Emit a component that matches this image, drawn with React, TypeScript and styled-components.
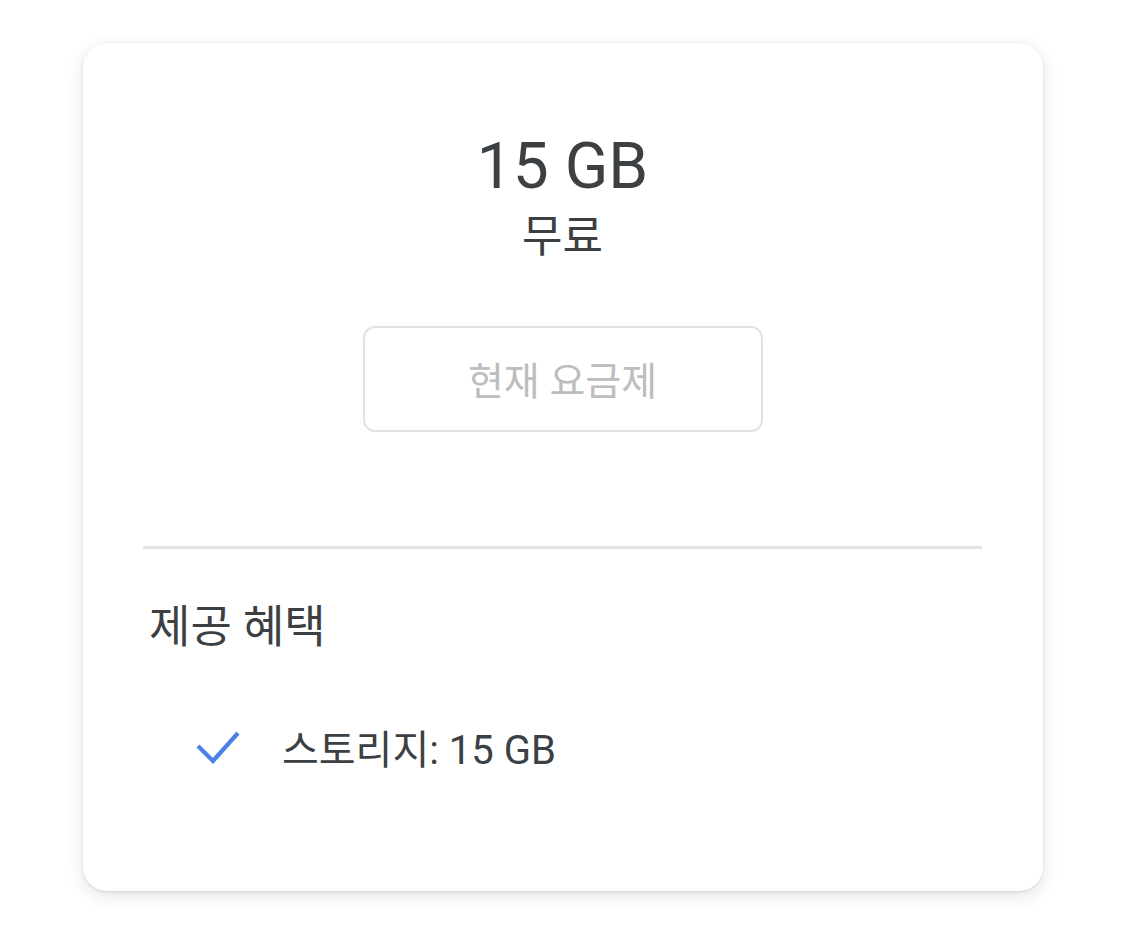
import * as React from 'react'
import styled, { createGlobalStyle } from 'styled-components'

const GlobalStyle = createGlobalStyle`
  html, body {
    margin: 0;
    padding: 0;
    background: #ffffff;
  }
  body {
    font-family: Roboto, "Noto Sans CJK KR", "Noto Sans", sans-serif;
    color: #3c4043;
  }
`

const Page = styled.div`
  padding: 43px 82px 41px 83px;
`

const Card = styled.div`
  width: 960px;
  height: 848px;
  box-sizing: border-box;
  padding: 85px 61px 0 60px;
  background: #fff;
  border-radius: 24px;
  box-shadow: 0 1px 3px rgba(0, 0, 0, 0.1), 0 5px 18px rgba(0, 0, 0, 0.11);
  display: flex;
  flex-direction: column;
`

const PlanHead = styled.div`
  display: flex;
  flex-direction: column;
  align-items: center;
`

const Size = styled.div`
  font-size: 64px;
  line-height: 77px;
  font-weight: 400;
`

const Price = styled.div`
  font-size: 44px;
  line-height: 50px;
  margin-top: 7px;
`

const PlanButton = styled.button`
  margin-top: 64px;
  width: 400px;
  height: 106px;
  border: 2px solid #e3e3e3;
  border-radius: 12px;
  background: #fff;
  color: #bdbdbd;
  font-family: Roboto, "Noto Sans CJK KR", sans-serif;
  font-size: 39px;
  display: flex;
  align-items: center;
  justify-content: center;
  padding-bottom: 4px;
`

const Divider = styled.hr`
  margin: 114px 0 0;
  border: none;
  height: 3px;
  background: #e3e3e3;
`

const SectionTitle = styled.div`
  margin-top: 53px;
  padding-left: 6px;
  font-size: 45px;
  line-height: 52px;
`

const Feature = styled.div`
  margin-top: 68px;
  padding-left: 53px;
  display: flex;
  align-items: center;
  gap: 42px;
  height: 50px;
  font-size: 40px;
`

const Check = () => (
  <svg width="44" height="34" viewBox="0 0 44 34">
    <polyline
      points="2,16 17,31 42,3"
      fill="none"
      stroke="#4a80e8"
      strokeWidth="4.2"
      strokeLinecap="butt"
      strokeLinejoin="miter"
    />
  </svg>
)

export default function App() {
  return (
    <>
      <GlobalStyle />
      <Page>
        <Card>
          <PlanHead>
            <Size>15 GB</Size>
            <Price>무료</Price>
            <PlanButton disabled>현재 요금제</PlanButton>
          </PlanHead>
          <Divider />
          <SectionTitle>제공 혜택</SectionTitle>
          <Feature>
            <Check />
            <span>스토리지: 15 GB</span>
          </Feature>
        </Card>
      </Page>
    </>
  )
}
